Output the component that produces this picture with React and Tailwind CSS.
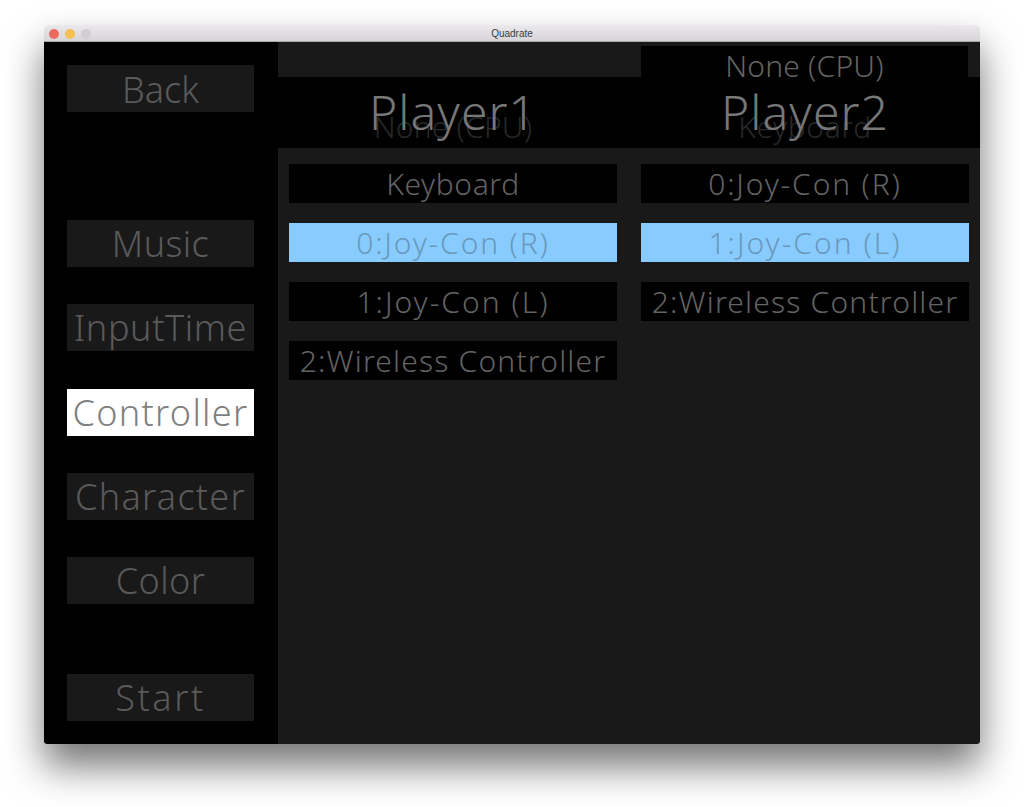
import React from "react";

const uiFont = "font-['Noto_Sans',sans-serif] font-light";

// Left column menu button
const MenuButton = ({ label, active, className = "" }) => (
  <div
    className={`w-[187px] h-[47px] flex items-center justify-center text-[36px] leading-none whitespace-nowrap ${
      active ? "bg-white text-[#7f7f7f]" : "bg-[#191919] text-[#5a5a5a]"
    } ${className}`}
  >
    {label}
  </div>
);

// One device row in a player column
const DeviceRow = ({ label, selected, className = "" }) => (
  <div
    className={`h-[39px] flex items-center justify-center text-[30px] leading-none whitespace-nowrap ${
      selected ? "bg-[#88ccff] text-[#6a99bd]" : "bg-black text-[#636363]"
    } ${className}`}
  >
    {label}
  </div>
);

// Big player title, with the faded current device sitting under it
const PlayerHeader = ({ title, ghost, ghostClass = "" }) => (
  <div className="relative w-[328px] h-[71px] flex justify-center">
    <span className={`absolute top-[30px] text-[30px] leading-[40px] text-[#282828] ${ghostClass}`}>{ghost}</span>
    <span className="relative mt-[11px] text-[48px] leading-[48px] tracking-[1.1px] text-[#777777] whitespace-nowrap">{title}</span>
  </div>
);

export default function App() {
  return (
    <div className={`w-[1024px] h-[807px] bg-white pt-[25px] pl-[44px] overflow-hidden ${uiFont}`}>
      <div className="w-[936px] h-[719px] rounded-t-[5px] rounded-b-[3px] shadow-[0_22px_38px_rgba(0,0,0,0.55)] flex flex-col overflow-hidden">
        {/* Title bar */}
        <div className="relative h-[17px] shrink-0 pt-[2px] bg-gradient-to-b from-[#ebe9eb] to-[#d6d4d6] border-b border-[#a9a9a9] flex items-center justify-center">
          <div className="absolute left-[5px] top-[4px] flex gap-[6px]">
            <span className="w-[10px] h-[10px] rounded-full bg-[#ee6a5f]" />
            <span className="w-[10px] h-[10px] rounded-full bg-[#f5c04f]" />
            <span className="w-[10px] h-[10px] rounded-full bg-[#d0ced0]" />
          </div>
          <span className="font-['Liberation_Sans',sans-serif] font-normal text-[10px] leading-none text-[#3c3c3c]">
            Quadrate
          </span>
        </div>

        <div className="flex flex-1 min-h-0">
          {/* Sidebar */}
          <div className="w-[234px] shrink-0 bg-black pl-[23px] pt-[23px] flex flex-col">
            <MenuButton label="Back" className="pt-[2px]" />
            <MenuButton label="Music" className="mt-[108px] tracking-[0.4px]" />
            <MenuButton label="InputTime" className="mt-[37px] tracking-[0.6px]" />
            <MenuButton label="Controller" active className="mt-[38px] tracking-[1.3px]" />
            <MenuButton label="Character" className="mt-[37px] tracking-[1.3px]" />
            <MenuButton label="Color" className="mt-[37px] tracking-[0.4px]" />
            <MenuButton label="Start" className="mt-[70px] tracking-[2.6px]" />
          </div>

          {/* Player columns */}
          <div className="flex-1 bg-[#191919] flex flex-col">
            <div className="h-[35px] shrink-0 pl-[363px] pt-[4px]">
              {/* z-10 so the brackets hang over the black header band */}
              <div className="relative z-10 w-[327px] h-[31px] bg-black flex justify-center pt-[5px] text-[30px] leading-none tracking-[0.2px] text-[#636363]">
                None (CPU)
              </div>
            </div>
            <div className="h-[71px] shrink-0 bg-black flex pl-[11px] gap-[24px]">
              <PlayerHeader title="Player1" ghost="None (CPU)" ghostClass="tracking-[0.2px]" />
              <PlayerHeader title="Player2" ghost="Keyboard" ghostClass="tracking-[0.6px]" />
            </div>
            <div className="flex pl-[11px] pt-[16px] gap-[24px]">
              <div className="w-[328px] flex flex-col gap-[20px]">
                <DeviceRow label="Keyboard" className="tracking-[0.6px]" />
                <DeviceRow label="0:Joy-Con (R)" selected className="tracking-[1.85px]" />
                <DeviceRow label="1:Joy-Con (L)" className="tracking-[2px]" />
                <DeviceRow label="2:Wireless Controller" className="tracking-[1.2px]" />
              </div>
              <div className="w-[328px] flex flex-col gap-[20px]">
                <DeviceRow label="0:Joy-Con (R)" className="tracking-[1.85px]" />
                <DeviceRow label="1:Joy-Con (L)" selected className="tracking-[2px]" />
                <DeviceRow label="2:Wireless Controller" className="tracking-[1.2px]" />
              </div>
            </div>
          </div>
        </div>
      </div>
    </div>
  );
}
